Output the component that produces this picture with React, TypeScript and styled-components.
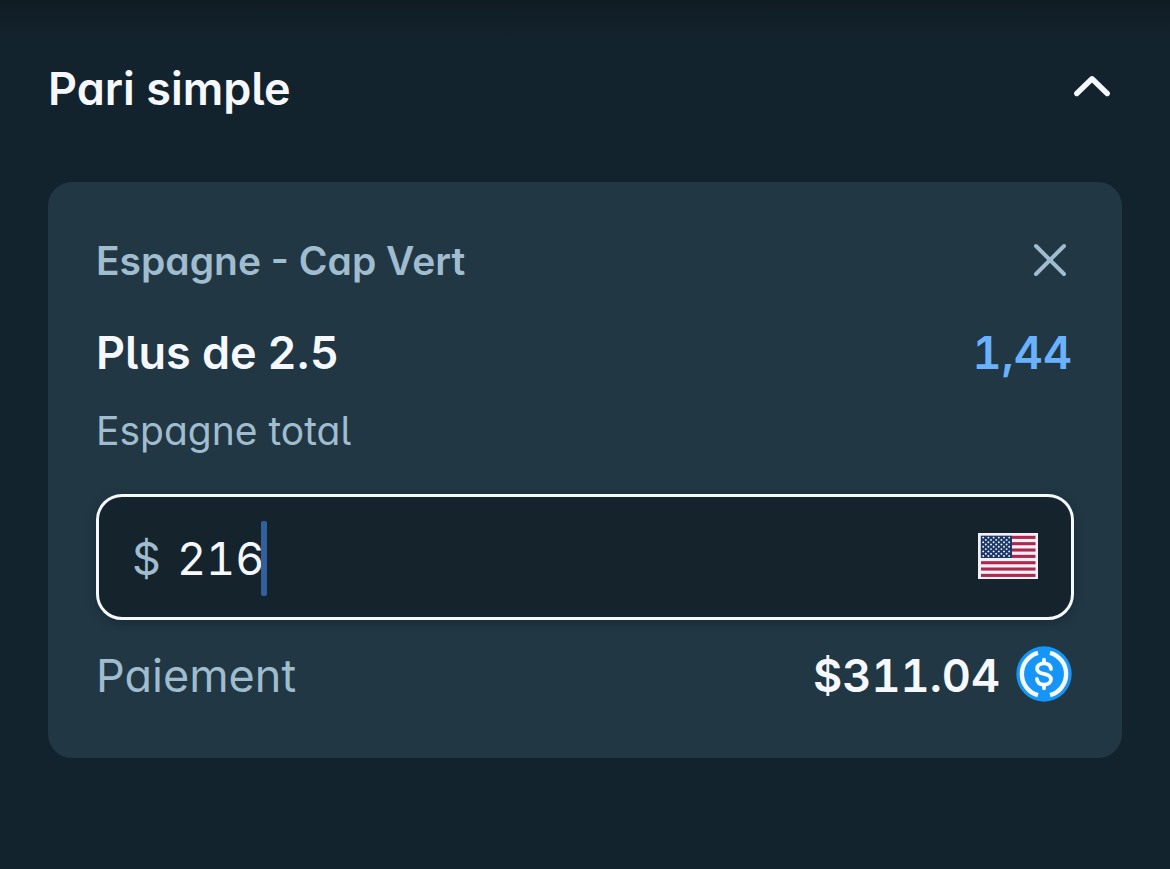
import React, { useState } from "react";
import styled, { createGlobalStyle } from "styled-components";

const color = {
  page: "#13232d",
  card: "#213743",
  field: "#15242c",
  text: "#f5f9ff",
  muted: "#a0bccf",
  odds: "#6ab2ff",
  caret: "#325f9d",
  coin: "#1495f7",
};

const textFeatures = `"cv11", "cv05", "ss03"`;
const numberFeatures = `"cv11", "cv05", "ss03", "tnum"`;

const GlobalStyle = createGlobalStyle`
  * { box-sizing: border-box; }
  body {
    margin: 0;
    min-height: 100vh;
    background: ${color.page};
    font-family: Inter, "Liberation Sans", sans-serif;
    font-feature-settings: ${textFeatures};
    color: ${color.text};
  }
  button { padding: 0; border: 0; background: none; cursor: pointer; }
`;

const Slip = styled.main`
  min-height: 100vh;
  padding: 0 48px 48px;
  background: linear-gradient(to bottom, #101c24 0, ${color.page} 40px);
`;

const Header = styled.header`
  display: flex;
  align-items: center;
  justify-content: space-between;
  height: 182px;
  padding-bottom: 8px;
`;

const Title = styled.h1`
  margin: 0;
  padding-top: 4px;
  font-size: 45px;
  line-height: 72px;
  font-weight: 600;
`;

const IconButton = styled.button<{ $tone: string; $width: number }>`
  display: flex;
  align-items: center;
  justify-content: center;
  width: ${(p) => p.$width}px;
  height: 48px;
  color: ${(p) => p.$tone};
`;

const Card = styled.section`
  display: flex;
  flex-direction: column;
  padding: 48px 48px 50px;
  border-radius: 24px;
  background: ${color.card};
`;

const Row = styled.div<{ $height: number; $after?: number }>`
  display: flex;
  align-items: center;
  justify-content: space-between;
  height: ${(p) => p.$height}px;
  margin-bottom: ${(p) => p.$after ?? 0}px;
  padding-right: 2px;
`;

const Label = styled.span<{ $size: number; $weight: number; $tone: string; $numeric?: boolean }>`
  padding-top: 2px;
  font-size: ${(p) => p.$size}px;
  line-height: 60px;
  font-weight: ${(p) => p.$weight};
  font-feature-settings: ${(p) => (p.$numeric ? numberFeatures : textFeatures)};
  color: ${(p) => p.$tone};
`;

const PayoutRow = styled(Row)`
  ${Label} { padding-top: 4px; }
`;

const Payout = styled.div`
  display: flex;
  align-items: center;
  gap: 16px;
`;

const Field = styled.label`
  display: flex;
  align-items: center;
  height: 126px;
  margin-bottom: 20px;
  padding: 0 33px;
  border: 3px solid ${color.text};
  border-radius: 26px;
  background: ${color.field};
  box-shadow: 0 3px 8px rgba(15, 33, 46, 0.5);
  font-feature-settings: ${numberFeatures};
`;

const Currency = styled.span`
  margin-right: 16px;
  padding-top: 2px;
  font-size: 45px;
  color: ${color.muted};
`;

const Amount = styled.input`
  field-sizing: content;
  height: 75px;
  min-width: 0;
  padding: 2px 0 0;
  border: 0;
  outline: 0;
  background: transparent;
  color: ${color.text};
  font: inherit;
  font-feature-settings: inherit;
  font-size: 45px;
`;

const Caret = styled.span`
  width: 6px;
  height: 75px;
  margin: 2px auto 0 -3px;
  border-radius: 2px;
  background: ${color.caret};
`;

const ChevronUp = () => (
  <svg width="40" height="24" viewBox="0 0 40 24" fill="none" aria-hidden="true">
    <path d="M4.800 18.500 20 3.800 35.200 18.500" stroke="currentColor" strokeWidth="5.400" strokeLinecap="round" strokeLinejoin="round" />
  </svg>
);

const Cross = () => (
  <svg width="36" height="36" viewBox="0 0 36 36" fill="none" aria-hidden="true">
    <path d="M4 4 32 32M32 4 4 32" stroke="currentColor" strokeWidth="4" strokeLinecap="round" />
  </svg>
);

const starRows = Array.from({ length: 9 }, (_, row) =>
  Array.from({ length: row % 2 ? 5 : 6 }, (_, i) => ({
    x: 5.2 + i * 5.2 + (row % 2 ? 2.6 : 0),
    y: 4.6 + row * 2.3,
  }))
).flat();

const FlagArt = styled.svg`
  display: block;
  margin-bottom: 2px;
`;

const UsFlag = () => (
  <FlagArt width="60" height="46" viewBox="0 0 60 46" role="img" aria-label="USD">
    <rect width="60" height="46" fill="#f0f0f7" />
    {Array.from({ length: 7 }, (_, i) => (
      <rect key={i} x="3" y={2.8 + i * 6.34} width="54.500" height="3.100" fill="#b0264c" />
    ))}
    <rect x="2.800" y="2.800" width="31.200" height="22.200" fill="#1b3768" />
    {starRows.map((s) => (
      <circle key={`${s.x}-${s.y}`} cx={s.x} cy={s.y} r="0.950" fill="#f5f8ff" />
    ))}
  </FlagArt>
);

const Coin = () => (
  <svg width="56" height="56" viewBox="-28 -28 56 56" fill="none" role="img" aria-label="USDC">
    <circle r="27.700" fill={color.coin} />
    <g stroke={color.text}>
      <path d="M-6-21.200A22 22 0 0 0-6 21.200M6-21.200A22 22 0 0 1 6 21.200" strokeWidth="4.400" />
      <path
        d="M7-5C6.500-8.800 3.800-10.600 0-10.600C-4-10.600-6.900-8.600-6.900-5.300C-6.900-2-4.400-1 0-.1C4.400.8 7 2 7 5.300C7 8.700 4 10.600 0 10.600C-4 10.600-6.600 8.800-7.100 5"
        strokeWidth="3.800"
        strokeLinecap="round"
      />
      <path d="M0-14.300V-11M0 11V14.300" strokeWidth="3.800" strokeLinecap="round" />
    </g>
  </svg>
);

export default function App() {
  const [open, setOpen] = useState(true);
  const [amount, setAmount] = useState("216");

  return (
    <>
      <GlobalStyle />
      <Slip>
        <Header>
          <Title>Pari simple</Title>
          <IconButton $tone={color.text} $width={60} aria-label="Replier" aria-expanded={open} onClick={() => setOpen(!open)}>
            <ChevronUp />
          </IconButton>
        </Header>
        {open && (
          <Card>
            <Row $height={60} $after={26}>
              <Label $size={39} $weight={600} $tone={color.muted}>Espagne - Cap Vert</Label>
              <IconButton $tone={color.muted} $width={44} aria-label="Retirer">
                <Cross />
              </IconButton>
            </Row>
            <Row $height={72} $after={12}>
              <Label $size={45} $weight={600} $tone={color.text}>Plus de 2.5</Label>
              <Label $size={45} $weight={600} $tone={color.odds} $numeric>1,44</Label>
            </Row>
            <Row $height={60} $after={34}>
              <Label $size={39} $weight={400} $tone={color.muted}>Espagne total</Label>
            </Row>
            <Field>
              <Currency>$</Currency>
              <Amount aria-label="Mise" inputMode="decimal" value={amount} onChange={(e) => setAmount(e.target.value)} />
              <Caret />
              <UsFlag />
            </Field>
            <PayoutRow $height={68}>
              <Label $size={45} $weight={400} $tone={color.muted}>Paiement</Label>
              <Payout>
                <Label $size={45} $weight={600} $tone={color.text} $numeric>$311.04</Label>
                <Coin />
              </Payout>
            </PayoutRow>
          </Card>
        )}
      </Slip>
    </>
  );
}
